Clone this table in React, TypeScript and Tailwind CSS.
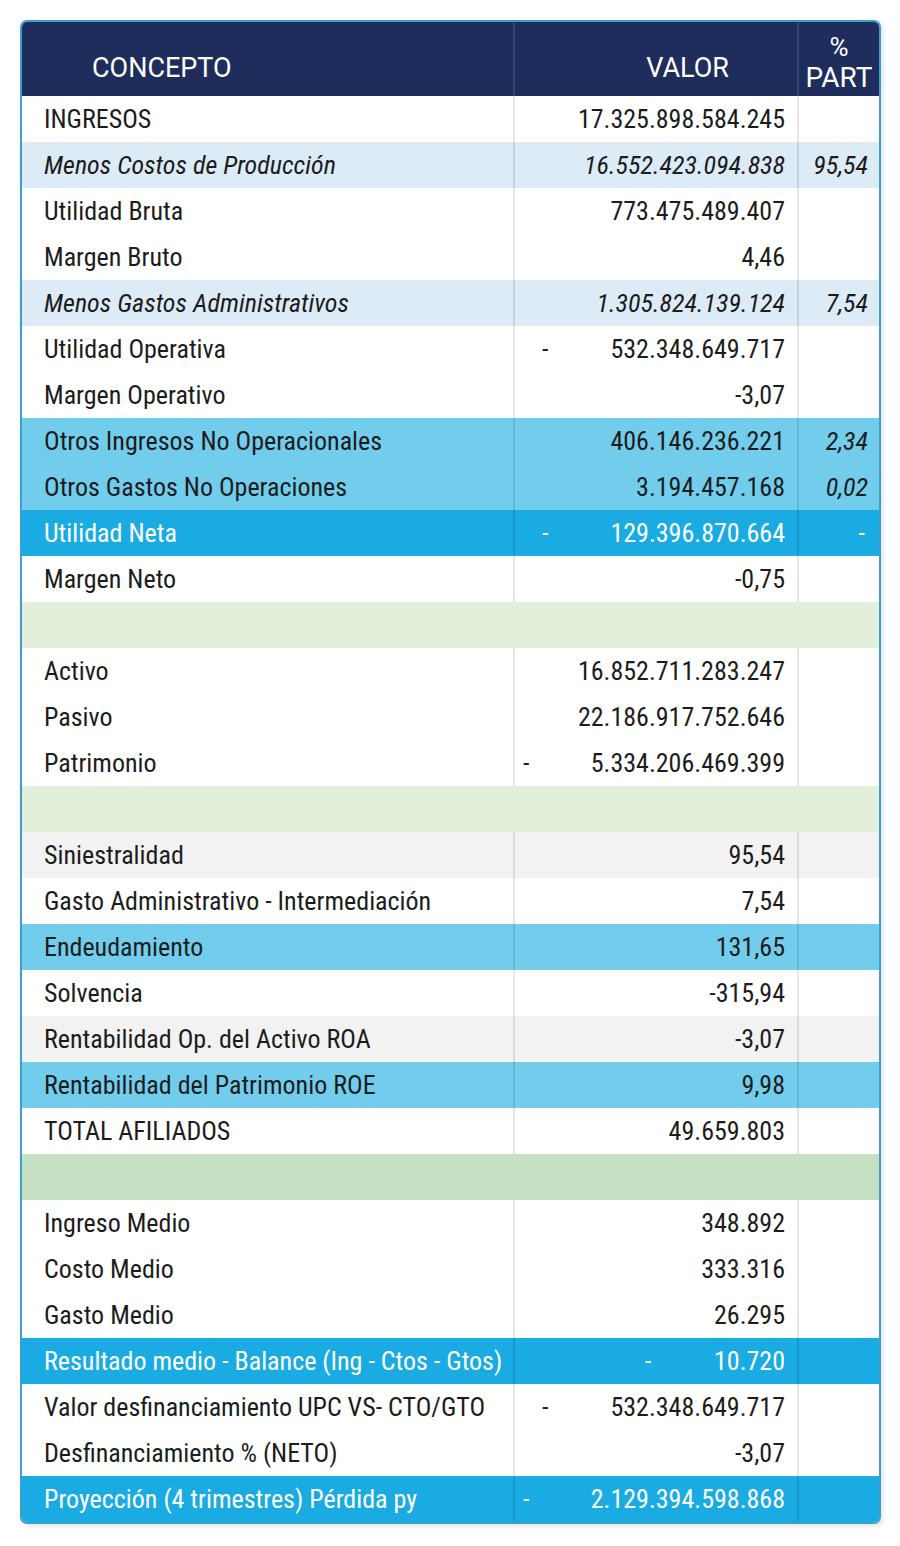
import React from "react";

type Row = {
  label?: string;
  value?: string;
  pct?: string;
  bg: string;
  dash?: string; // left margin class for the accounting "-" sign
  italic?: boolean;
  light?: boolean; // white text
  empty?: boolean;
};

const rows: Row[] = [
  { label: "INGRESOS", value: "17.325.898.584.245", bg: "bg-white" },
  { label: "Menos Costos de Producción", value: "16.552.423.094.838", pct: "95,54", bg: "bg-[#ddebf7]", italic: true },
  { label: "Utilidad Bruta", value: "773.475.489.407", bg: "bg-white" },
  { label: "Margen Bruto", value: "4,46", bg: "bg-white" },
  { label: "Menos Gastos Administrativos", value: "1.305.824.139.124", pct: "7,54", bg: "bg-[#ddebf7]", italic: true },
  { label: "Utilidad Operativa", value: "532.348.649.717", bg: "bg-white", dash: "ml-[27px]" },
  { label: "Margen Operativo", value: "-3,07", bg: "bg-white" },
  { label: "Otros Ingresos No Operacionales", value: "406.146.236.221", pct: "2,34", bg: "bg-[#72cdec]" },
  { label: "Otros Gastos No Operaciones", value: "3.194.457.168", pct: "0,02", bg: "bg-[#72cdec]" },
  { label: "Utilidad Neta", value: "129.396.870.664", pct: "-", bg: "bg-[#1aabe3]", light: true, dash: "ml-[27px]" },
  { label: "Margen Neto", value: "-0,75", bg: "bg-white" },
  { bg: "bg-[#e2efda]", empty: true },
  { label: "Activo", value: "16.852.711.283.247", bg: "bg-white" },
  { label: "Pasivo", value: "22.186.917.752.646", bg: "bg-white" },
  { label: "Patrimonio", value: "5.334.206.469.399", bg: "bg-white", dash: "ml-[8px]" },
  { bg: "bg-[#e2efda]", empty: true },
  { label: "Siniestralidad", value: "95,54", bg: "bg-[#f2f2f2]" },
  { label: "Gasto Administrativo - Intermediación", value: "7,54", bg: "bg-white" },
  { label: "Endeudamiento", value: "131,65", bg: "bg-[#72cdec]" },
  { label: "Solvencia", value: "-315,94", bg: "bg-white" },
  { label: "Rentabilidad Op. del Activo ROA", value: "-3,07", bg: "bg-[#f2f2f2]" },
  { label: "Rentabilidad del Patrimonio ROE", value: "9,98", bg: "bg-[#72cdec]" },
  { label: "TOTAL AFILIADOS", value: "49.659.803", bg: "bg-white" },
  { bg: "bg-[#c6e0c4]", empty: true },
  { label: "Ingreso Medio", value: "348.892", bg: "bg-white" },
  { label: "Costo Medio", value: "333.316", bg: "bg-white" },
  { label: "Gasto Medio", value: "26.295", bg: "bg-white" },
  { label: "Resultado medio - Balance (Ing - Ctos - Gtos)", value: "10.720", bg: "bg-[#1aabe3]", light: true, dash: "ml-[130px]" },
  { label: "Valor desfinanciamiento UPC VS- CTO/GTO", value: "532.348.649.717", bg: "bg-white", dash: "ml-[27px]" },
  { label: "Desfinanciamiento % (NETO)", value: "-3,07", bg: "bg-white" },
  { label: "Proyección (4 trimestres) Pérdida py", value: "2.129.394.598.868", bg: "bg-[#1aabe3]", light: true, dash: "ml-[8px]" },
];

const cond = "font-['Roboto_Condensed','Roboto',sans-serif] font-stretch-condensed";

function TableRow({ row }: { row: Row }) {
  if (row.empty) {
    return <div className={`h-[46px] ${row.bg}`} />;
  }
  const text = row.light ? "text-white" : "text-[#1c1c1c]";
  const ital = row.italic ? "italic" : "";
  return (
    <div className={`grid grid-cols-[491px_284px_82px] h-[46px] ${row.bg} ${text} ${cond} text-[26px] leading-none`}>
      <div className={`flex items-center pl-[22px] ${ital}`}>{row.label}</div>
      <div className={`flex items-center pr-[12px] border-l-2 border-black/10 ${ital}`}>
        {row.dash && <span className={row.dash}>-</span>}
        <span className="ml-auto">{row.value}</span>
      </div>
      <div
        className={`flex items-center justify-end border-l-2 border-black/10 ${
          row.pct === "-" ? "pr-[14px]" : "pr-[11px] italic"
        }`}
      >
        {row.pct}
      </div>
    </div>
  );
}

export default function App() {
  return (
    <div className="min-h-[1546px] w-[900px] bg-white pt-[20px] pl-[20px]">
      <div className="w-[861px] overflow-hidden rounded-[7px] border-2 border-[#3aa0d0] shadow-[2px_2px_4px_rgba(0,0,0,0.12)]">
        {/* Header */}
        <div className="grid grid-cols-[491px_284px_82px] h-[74px] bg-[#1e2d5b] text-white font-['Roboto',sans-serif]">
          <div className="flex items-end pl-[70px] pb-[14px] text-[27px] leading-none">CONCEPTO</div>
          <div className="flex items-end justify-end pr-[68px] pb-[14px] text-[27px] leading-none border-l-2 border-white/10">
            VALOR
          </div>
          <div className="flex flex-col items-center justify-end pb-[4px] text-[28px] leading-[28px] border-l-2 border-white/10">
            <span className="mb-[4px] text-[26px] leading-[26px]">%</span>
            <span>PART</span>
          </div>
        </div>
        {rows.map((row, i) => (
          <TableRow key={i} row={row} />
        ))}
      </div>
    </div>
  );
}
